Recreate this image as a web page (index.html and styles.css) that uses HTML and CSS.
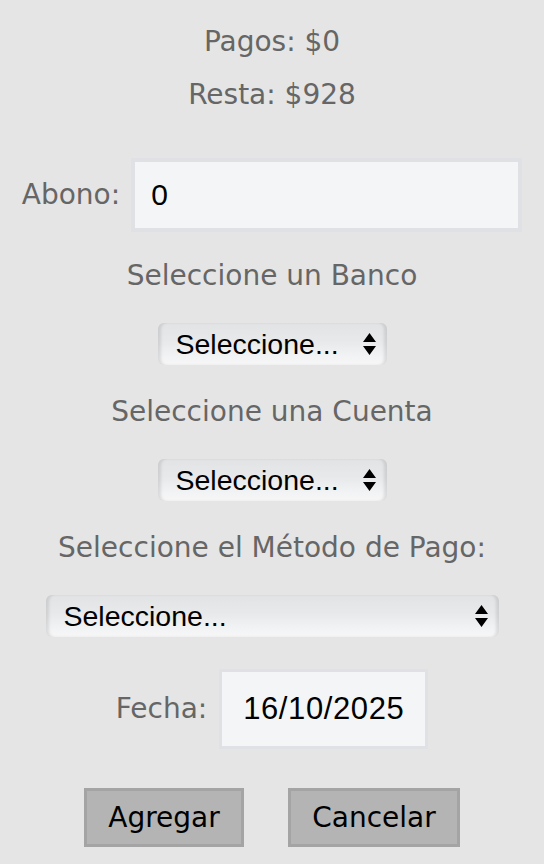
FILE: index.html
```html
<!DOCTYPE html>
<html lang="es">
<head>
<meta charset="utf-8">
<title>Abono</title>
<link rel="stylesheet" href="styles.css">
</head>
<body>
<main class="form">
  <p class="total total-first">Pagos: $0</p>
  <p class="total">Resta: $928</p>

  <div class="row row-abono">
    <label class="row-label" for="abono">Abono:</label>
    <div class="field field-abono"><span class="field-value">0</span></div>
  </div>

  <p class="caption caption-first">Seleccione un Banco</p>
  <div class="select select-short">
    <span class="select-text">Seleccione...</span>
    <svg class="select-arrows" width="13" height="22" viewBox="0 0 13 22"><path d="M6.5 0 L13 9 L0 9 Z M0 13 L13 13 L6.5 22 Z" fill="#000"/></svg>
  </div>

  <p class="caption">Seleccione una Cuenta</p>
  <div class="select select-short">
    <span class="select-text">Seleccione...</span>
    <svg class="select-arrows" width="13" height="22" viewBox="0 0 13 22"><path d="M6.5 0 L13 9 L0 9 Z M0 13 L13 13 L6.5 22 Z" fill="#000"/></svg>
  </div>

  <p class="caption">Seleccione el Método de Pago:</p>
  <div class="select select-wide">
    <span class="select-text">Seleccione...</span>
    <svg class="select-arrows" width="13" height="22" viewBox="0 0 13 22"><path d="M6.5 0 L13 9 L0 9 Z M0 13 L13 13 L6.5 22 Z" fill="#000"/></svg>
  </div>

  <div class="row row-fecha">
    <label class="row-label">Fecha:</label>
    <div class="field field-fecha"><span class="field-value">16/10/2025</span></div>
  </div>

  <div class="actions">
    <button class="btn btn-add" type="button">Agregar</button>
    <button class="btn btn-cancel" type="button">Cancelar</button>
  </div>
</main>
</body>
</html>
```
FILE: styles.css
```css
html, body {
  margin: 0;
  padding: 0;
  background: #e5e5e5;
}
body {
  width: 544px;
  height: 864px;
  overflow: hidden;
  font-family: "DejaVu Sans", Verdana, sans-serif;
}
.form {
  display: flex;
  flex-direction: column;
  align-items: center;
}
.total {
  margin: 19px 0 0;
  font-size: 28px;
  line-height: 34px;
  color: #666;
}
.total-first {
  margin-top: 25px;
}
.row {
  display: flex;
  align-items: center;
  gap: 11px;
}
.row-abono {
  margin-top: 46px;
}
.row-fecha {
  margin-top: 32px;
  gap: 12px;
}
.row-label {
  font-size: 28px;
  line-height: 34px;
  color: #666;
}
.field {
  box-sizing: border-box;
  display: flex;
  align-items: center;
  background: #f4f5f7;
  border: 4px solid #dfe1e4;
  font-family: "Liberation Sans", Arial, sans-serif;
  font-size: 30px;
  color: #000;
}
.field-abono {
  width: 391px;
  height: 74px;
  padding-left: 16px;
}
.field-fecha {
  width: 209px;
  height: 80px;
  border-width: 3px;
  justify-content: center;
  font-size: 31px;
  letter-spacing: 0.6px;
}
.caption {
  margin: 30px 0 0;
  font-size: 28px;
  line-height: 34px;
  color: #666;
}
.caption-first {
  margin-top: 27px;
}
.select {
  box-sizing: border-box;
  height: 42px;
  margin-top: 30px;
  display: flex;
  align-items: center;
  justify-content: space-between;
  padding: 0 11px 0 18px;
  border-radius: 6px;
  background: linear-gradient(to bottom, #e2e3e5 0%, #e8e9eb 45%, #f2f3f4 80%, #f7f7f8 100%);
  box-shadow: inset 4px 0 3px -1px rgba(0,0,0,0.1), inset -4px 0 3px -1px rgba(0,0,0,0.1);
  font-family: "Liberation Sans", Arial, sans-serif;
  font-size: 28.5px;
  color: #000;
}
.select-short {
  width: 229px;
}
.select-wide {
  width: 453px;
}
.select-arrows {
  display: block;
}
.actions {
  margin-top: 39px;
  display: flex;
  gap: 44px;
}
.btn {
  box-sizing: border-box;
  height: 59px;
  border: 3px solid #a4a4a4;
  background: #b4b4b4;
  font-family: "DejaVu Sans", Verdana, sans-serif;
  font-size: 28px;
  color: #000;
  padding: 0;
  border-radius: 0;
}
.btn-add {
  width: 160px;
}
.btn-cancel {
  width: 172px;
}
```
